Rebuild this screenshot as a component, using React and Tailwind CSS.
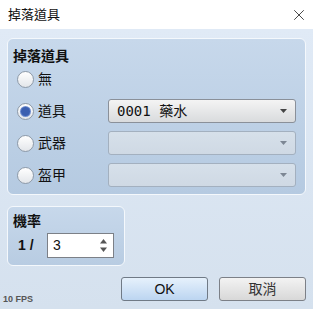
import { X } from 'lucide-react'

const font = { fontFamily: '"Liberation Sans", "Noto Sans CJK TC", sans-serif' }

function Radio({ checked }) {
  return (
    <span className="w-[17px] h-[17px] rounded-full border border-[#8e9aa8] bg-gradient-to-b from-[#ffffff] to-[#e3e6ea] flex items-center justify-center shrink-0">
      {checked && <span className="w-[9px] h-[9px] rounded-full bg-[#3b5fb0] shadow-[0_0_0_1px_#6f8ed0]" />}
    </span>
  )
}

function Arrow({ dim }) {
  return (
    <svg width="7" height="4" viewBox="0 0 7 4" className="shrink-0">
      <path d="M0 0h7L3.5 4z" fill={dim ? '#7d8794' : '#444'} />
    </svg>
  )
}

function Select({ value, disabled }) {
  return (
    <div
      className={`w-[188px] h-[24px] rounded-[3px] border flex items-center justify-between pl-[8px] pr-[8px] ${
        disabled
          ? 'border-[#a3b0bf] bg-gradient-to-b from-[#d6e0ea] to-[#cfd9e4]'
          : 'border-[#8a9099] bg-gradient-to-b from-[#f4f4f4] to-[#d9dbdd]'
      }`}
    >
      <span className="text-[14px] text-[#111] whitespace-pre" style={{ fontFamily: '"DejaVu Sans Mono", "Noto Sans CJK TC", monospace' }}>
        {value}
      </span>
      <Arrow dim={disabled} />
    </div>
  )
}

function Row({ label, checked, value, disabled, select = true }) {
  return (
    <div className="h-[32px] flex items-center">
      <div className="w-[100px] flex items-center gap-[4px] pl-[9px]">
        <Radio checked={checked} />
        <span className="text-[14px] text-[#111]">{label}</span>
      </div>
      {select && <Select value={value} disabled={disabled} />}
    </div>
  )
}

export default function App() {
  return (
    <div className="w-[313px] h-[309px] flex flex-col bg-white overflow-hidden relative" style={font}>
      {/* Title bar */}
      <div className="h-[29px] flex items-center justify-between pl-[8px] pr-[5px] shrink-0">
        <span className="text-[13px] text-[#111]">掉落道具</span>
        <X size={18} strokeWidth={1.1} className="text-[#222]" />
      </div>

      {/* Body */}
      <div className="flex-1 flex flex-col px-[7px] pt-[9px] bg-gradient-to-b from-[#e0eaf6] to-[#d5e1ee]">
        <div className="h-[157px] rounded-[6px] border border-[#f4f8fc] bg-gradient-to-b from-[#c7d8eb] to-[#b5cae1] flex flex-col">
          <div className="h-[24px] flex items-end pl-[5px]">
            <span className="text-[14px] font-bold text-[#111] leading-none">掉落道具</span>
          </div>
          <Row label="無" select={false} />
          <Row label="道具" checked value="0001 藥水" />
          <Row label="武器" disabled value="" />
          <Row label="盔甲" disabled value="" />
        </div>

        <div className="mt-[11px] w-[118px] h-[60px] rounded-[6px] border border-[#f4f8fc] bg-gradient-to-b from-[#c7d8eb] to-[#b8cce2] flex flex-col">
          <div className="h-[21px] flex items-end pl-[5px]">
            <span className="text-[14px] font-bold text-[#111] leading-none">機率</span>
          </div>
          <div className="flex items-center mt-[5px] pl-[10px]">
            <span className="text-[14px] font-semibold text-[#111] w-[29px]">1 /</span>
            <div className="w-[67px] h-[25px] border border-[#7c8087] bg-white flex items-center justify-between pl-[5px] pr-[6px]">
              <span className="text-[14px] text-[#111]">3</span>
              <svg width="7" height="13" viewBox="0 0 7 13">
                <path d="M0 4.5L3.5 0 7 4.5z" fill="#555" />
                <path d="M0 8.5h7L3.5 13z" fill="#555" />
              </svg>
            </div>
          </div>
        </div>

        <div className="mt-[11px] flex justify-end gap-[11px]">
          <button className="w-[87px] h-[24px] rounded-[3px] border border-[#707a86] bg-gradient-to-b from-[#e6f1fc] to-[#bcd5f1] text-[14px] text-[#111]">
            OK
          </button>
          <button className="w-[87px] h-[24px] rounded-[3px] border border-[#7c8087] bg-gradient-to-b from-[#f3f3f3] to-[#d8d8d8] text-[14px] text-[#333]">
            取消
          </button>
        </div>
      </div>

      {/* FPS overlay */}
      <span className="absolute left-[3px] bottom-[5px] text-[9px] font-bold text-[#555] leading-none">10 FPS</span>
    </div>
  )
}
